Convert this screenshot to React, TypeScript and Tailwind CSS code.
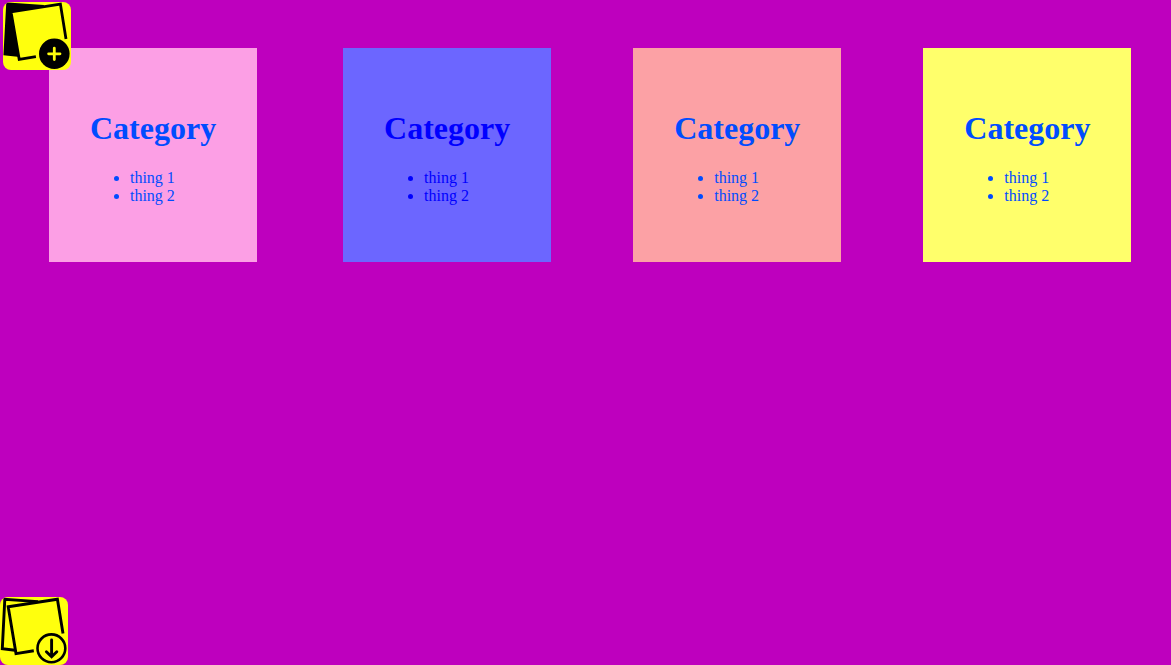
type Category = {
  title: string;
  things: string[];
  tone: string;
};

const things = ["thing 1", "thing 2"];

const firstCategory: Category = { title: "Category", things, tone: "bg-[#fc9fe5] text-[#004cff]" };

const otherCategories: Category[] = [
  { title: "Category", things, tone: "bg-[#6c66ff] text-[#0000ff]" },
  { title: "Category", things, tone: "bg-[#fca1a5] text-[#004cff]" },
  { title: "Category", things, tone: "bg-[#ffff6b] text-[#004cff]" },
];

function CategoryCard({ title, things, tone }: Category) {
  return (
    <article className={`shrink-0 p-[3.5vw] ${tone}`}>
      <h1 className="mt-[21px] mb-[22px] text-[32px] leading-[37px] font-bold">{title}</h1>
      <ul className="mb-4 list-disc pl-10 text-base leading-[18px]">
        {things.map((thing) => (
          <li key={thing}>{thing}</li>
        ))}
      </ul>
    </article>
  );
}

function AddNoteIcon() {
  return (
    <svg viewBox="0 0 68 68" className="size-full" fill="none" strokeWidth="2.8" aria-hidden="true">
      <path d="M4.6 1.8 39 4.2 16 53.6 1.9 52Z" fill="#000" stroke="#000" />
      <path d="M8.2 9.8 57.6 2.2 62 37 33 54.6 16.2 57.3Z" fill="#ffff0d" />
      <path d="M32.9 54.6 16.2 57.3 8 9.8 57.4 2.1 63 37" stroke="#000" />
      <circle cx="51.3" cy="51.7" r="17" fill="#ffff0d" />
      <circle cx="51.3" cy="51.7" r="15.3" fill="#000" />
      <path d="M51.3 46.1v11.4M45.6 51.8h11.4" stroke="#ffff0d" strokeLinecap="round" />
    </svg>
  );
}

function SaveNoteIcon() {
  return (
    <svg viewBox="0 0 68 68" className="size-full" fill="none" stroke="#000" strokeWidth="2.9" aria-hidden="true">
      <path d="M15 53.3 2.3 51.8 4.8 2.2 38 4.6" />
      <path d="M33.8 53.8 16 56.6 8.2 9.7 57.4 2.2 63 36.6" />
      <circle cx="51.4" cy="51.3" r="13.9" strokeWidth="2.6" />
      <path d="M51.6 43v16.6M46.4 54.8l5.2 5 5.2-5" strokeLinecap="round" />
    </svg>
  );
}

export default function App() {
  return (
    <div className="min-h-screen bg-[#be00be] font-['Liberation_Serif',serif]">
      <button
        type="button"
        aria-label="Add note"
        className="fixed top-0.5 left-[3px] size-[68px] overflow-hidden rounded-lg bg-[#ffff0d]"
      >
        <AddNoteIcon />
      </button>

      <main className="flex flex-wrap gap-x-[calc(7vw+4px)] gap-y-[7vw] pt-[calc(3.5vw+7px)] pl-[calc(3.5vw+8px)]">
        <CategoryCard {...firstCategory} />
        <div className="flex flex-wrap gap-[7vw]">
          {otherCategories.map((category, index) => (
            <CategoryCard key={index} {...category} />
          ))}
        </div>
      </main>

      <button
        type="button"
        aria-label="Save notes"
        className="fixed bottom-0 left-0 size-[68px] overflow-hidden rounded-lg bg-[#ffff0d]"
      >
        <SaveNoteIcon />
      </button>
    </div>
  );
}
